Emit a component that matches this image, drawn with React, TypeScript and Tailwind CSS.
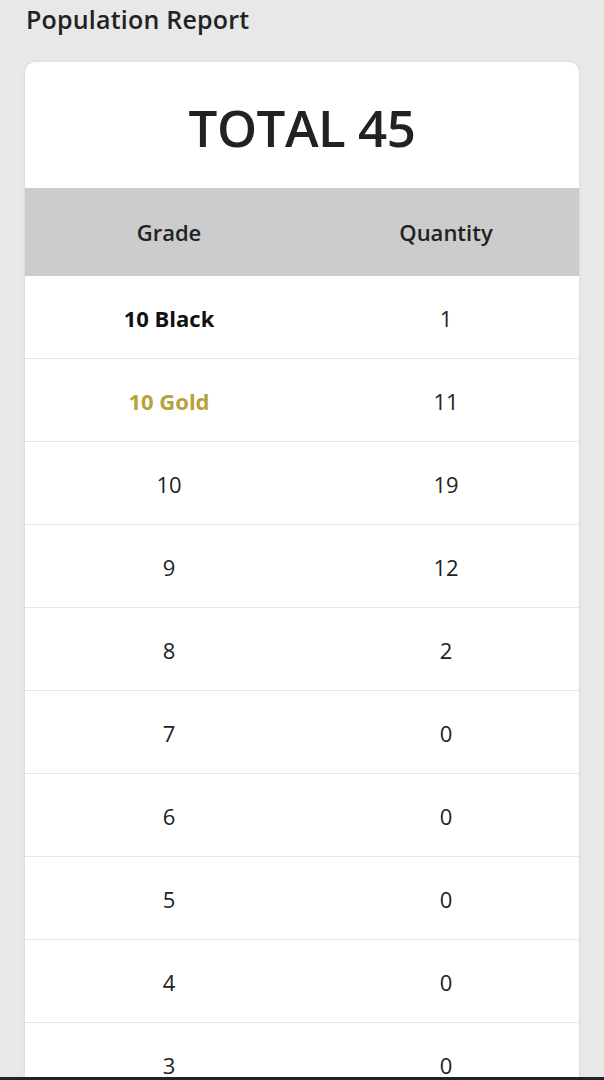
import React from "react";

const rows: { g: string; q: string; cls?: string }[] = [
  { g: "10 Black", q: "1", cls: "font-bold text-[#111]" },
  { g: "10 Gold", q: "11", cls: "font-bold text-[#b5a23a]" },
  { g: "10", q: "19" },
  { g: "9", q: "12" },
  { g: "8", q: "2" },
  { g: "7", q: "0" },
  { g: "6", q: "0" },
  { g: "5", q: "0" },
  { g: "4", q: "0" },
  { g: "3", q: "0" },
];

export default function App() {
  return (
    <div
      className="relative h-[1080px] w-[604px] overflow-hidden bg-[#e8e8e8] text-[#222]"
      style={{ fontFamily: "'Open Sans', 'Noto Sans', sans-serif" }}
    >
      <h1 className="pl-[26px] pt-[3px] text-[25px] font-semibold leading-[32px] tracking-[0.2px] text-[#222]">
        Population Report
      </h1>
      <div className="mx-[25px] mt-[27px] overflow-hidden rounded-[10px] bg-white shadow-[0_0_3px_rgba(0,0,0,0.12)]">
        <div className="flex h-[126px] items-center justify-center pt-[4px] text-[51px] font-semibold tracking-[-0.5px] text-[#222]">
          TOTAL 45
        </div>
        <div className="grid h-[88px] grid-cols-2 items-center bg-[#cccccc] text-[22px] font-semibold">
          <div className="pl-[11px] text-center">Grade</div>
          <div className="pl-[11px] text-center">Quantity</div>
        </div>
        {rows.map((r, i) => (
          <div
            key={i}
            className="grid h-[83px] grid-cols-2 items-center border-b border-[#e6e6e6] text-[22px]"
          >
            <div className={"pl-[11px] pt-[2px] text-center " + (r.cls ?? "")}>{r.g}</div>
            <div className="pl-[11px] pt-[2px] text-center">{r.q}</div>
          </div>
        ))}
      </div>
      <div className="absolute bottom-0 left-0 h-[3px] w-full bg-[#222]" />
    </div>
  );
}
